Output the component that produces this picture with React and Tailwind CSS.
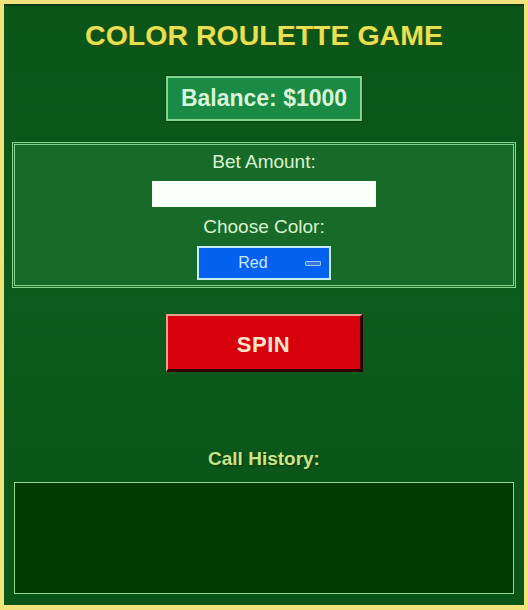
import { useState } from 'react'

export default function App() {
  const [bet, setBet] = useState('')
  const [color, setColor] = useState('red')

  return (
    <div className="w-[528px] h-[610px] bg-[#f1e27c] pt-[4px] pl-[4px] pr-[4px] pb-[5px]" style={{ fontFamily: '"Liberation Sans", Arial, sans-serif' }}>
      <div className="h-full flex flex-col items-center border-t-2 border-[#0a3d12] bg-gradient-to-b from-[#0b5519] via-[#0c5a1d] to-[#0a5418] px-[8px]">
        <h1 className="mt-[13px] text-[28.5px] leading-[32px] font-bold text-[#e6e052] [text-shadow:1px_1px_2px_#3a4a10]">
          COLOR ROULETTE GAME
        </h1>

        <div className="mt-[25px] w-[196px] h-[45px] flex items-center justify-center bg-[#1a8a44] border-2 border-[#82d98c] shadow-[0_0_0_1px_#0a4015]">
          <span className="text-[23px] font-bold text-[#d8f5d8]">Balance: $1000</span>
        </div>

        <div className="mt-[21px] w-full h-[146px] flex flex-col items-center bg-[#186a28] border-[3px] border-double border-[#86d38c]">
          <label className="mt-[6px] text-[19px] leading-[22px] text-[#d8f2d0]">Bet Amount:</label>
          <input
            value={bet}
            onChange={e => setBet(e.target.value)}
            className="mt-[8px] w-[224px] h-[26px] bg-[#fbfffa] outline-none px-1 text-[14px]"
          />
          <label className="mt-[9px] text-[19px] leading-[22px] text-[#d8f2d0]">Choose Color:</label>
          <div className="mt-[8px] relative w-[134px] h-[34px] bg-[#0562f0] border-2 border-[#c8ecf6] flex items-center">
            <select
              value={color}
              onChange={e => setColor(e.target.value)}
              className="appearance-none w-full h-full bg-transparent text-[#c8eaf8] text-[16px] text-center pr-[30px] pl-[8px] outline-none"
            >
              <option value="red">Red</option>
              <option value="black">Black</option>
              <option value="green">Green</option>
            </select>
            <span className="absolute right-[8px] top-[13px] w-[16px] h-[5px] bg-[#3a7ae0] border border-[#9fc6f0] rounded-[1px] pointer-events-none" />
          </div>
        </div>

        <button className="mt-[26px] w-[197px] h-[58px] pt-[3px] bg-[#d8000c] border-t-2 border-l-2 border-t-[#e8a08a] border-l-[#e8a08a] border-b-[3px] border-r-[3px] border-b-[#300000] border-r-[#300000] text-[22px] font-bold text-[#f8e4c8] tracking-[0.5px]">
          SPIN
        </button>

        <h2 className="mt-[76px] text-[19px] leading-[22px] font-bold text-[#c6e68e] [text-shadow:1px_1px_2px_#1a3000]">
          Call History:
        </h2>

        <div className="mt-[12px] w-[500px] h-[112px] bg-[#003c02] border border-[#8fd890]" />
      </div>
    </div>
  )
}
